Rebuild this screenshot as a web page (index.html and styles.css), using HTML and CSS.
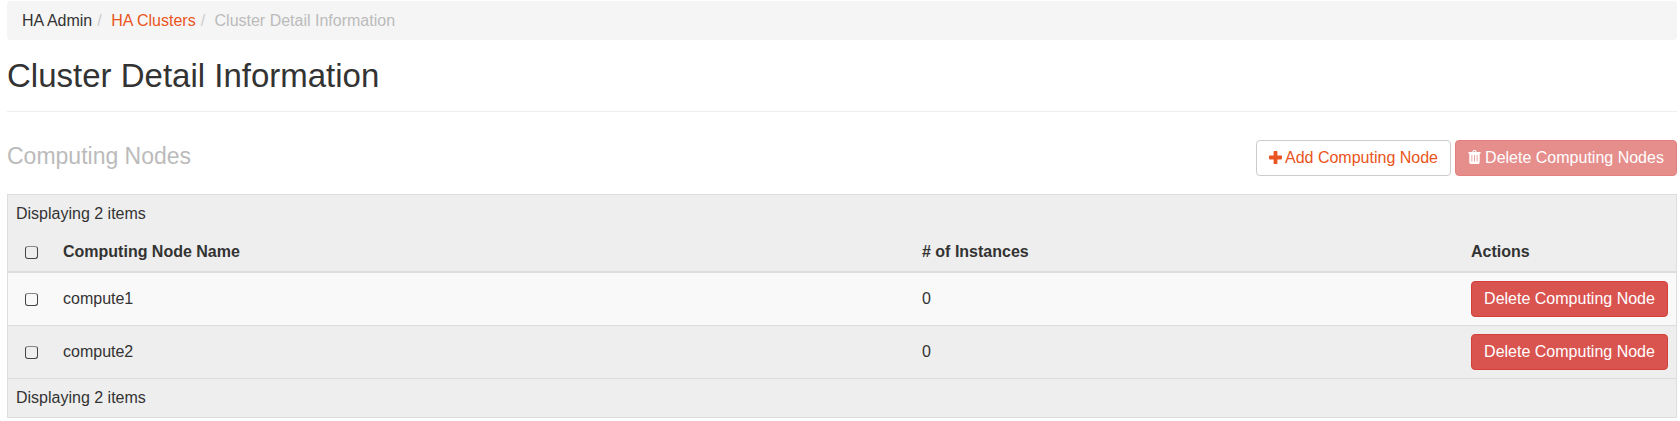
FILE: index.html
```html
<!DOCTYPE html>
<html lang="en">
<head>
<meta charset="utf-8">
<title>Cluster Detail Information</title>
<link rel="stylesheet" href="styles.css">
</head>
<body>
<ol class="breadcrumb">
  <li>HA Admin</li>
  <li><a href="#">HA Clusters</a></li>
  <li class="active">Cluster Detail Information</li>
</ol>
<header class="page-header"><h1>Cluster Detail Information</h1></header>
<div class="toolbar">
  <h3>Computing Nodes</h3>
  <div class="actions">
    <button class="btn btn-default"><svg class="icon plus" viewBox="0 0 13 13"><path d="M.8 4.600h3.800V.8q0-.8.800-.8h2.200q.8 0 .8.800v3.800h3.800q.8 0 .8.800v2.200q0 .8-.8.800H8.400v3.800q0 .8-.8.800H5.400q-.8 0-.8-.8V8.400H.8q-.8 0-.8-.8V5.400q0-.8.800-.8z"/></svg><span>Add Computing Node</span></button>
    <button class="btn btn-danger disabled"><svg class="icon trash" viewBox="0 0 13 14"><path fill-rule="evenodd" d="M4.200 2l.6-1.300Q5.100 0 5.800 0h1.400q.7 0 1 .7L8.800 2H12q.7 0 .7.600v1h-1v8.700q0 1.700-1.400 1.700H2.700q-1.400 0-1.400-1.700V3.600h-1v-1Q.3 2 1 2zM5.400 2h2.200l-.4-.9H5.800zM3.500 5v6.500h.8V5zM6.100 5v6.500h.8V5zM8.700 5v6.500h.8V5z"/></svg><span>Delete Computing Nodes</span></button>
  </div>
</div>
<table class="nodes">
  <colgroup><col class="col-check"><col class="col-name"><col class="col-count"><col class="col-actions"></colgroup>
  <thead>
    <tr class="summary"><td colspan="4">Displaying 2 items</td></tr>
    <tr class="labels"><th><span class="check"></span></th><th>Computing Node Name</th><th># of Instances</th><th>Actions</th></tr>
  </thead>
  <tbody>
    <tr class="odd"><td><span class="check"></span></td><td>compute1</td><td>0</td><td><button class="btn btn-danger">Delete Computing Node</button></td></tr>
    <tr><td><span class="check"></span></td><td>compute2</td><td>0</td><td><button class="btn btn-danger">Delete Computing Node</button></td></tr>
  </tbody>
  <tfoot><tr><td colspan="4">Displaying 2 items</td></tr></tfoot>
</table>
</body>
</html>
```
FILE: styles.css
```css
* { box-sizing: border-box; }
body {
  margin: 0;
  padding: 1px 3px 0 7px;
  background: #fff;
  color: #333;
  font: 16px/22px "Liberation Sans", Arial, sans-serif;
}
.breadcrumb {
  display: flex;
  height: 39px;
  margin: 0;
  padding: 9px 15px 8px;
  list-style: none;
  background: #f5f5f5;
  border-radius: 4px;
}
.breadcrumb li + li::before {
  content: "/\00a0";
  padding: 0 5px;
  color: #ccc;
}
.breadcrumb a { color: #e95420; text-decoration: none; }
.breadcrumb .active { color: #bbb; }
.page-header {
  height: 72px;
  padding-top: 17px;
  border-bottom: 1px solid #eee;
}
h1 { margin: 0; font-size: 33px; line-height: 37px; font-weight: 400; }
.toolbar {
  display: flex;
  justify-content: space-between;
  height: 36px;
  margin: 28px 0 18px;
}
h3 { margin: 0; font-size: 23px; line-height: 32px; font-weight: 400; color: #bbb; }
.actions { display: flex; gap: 4px; }
.btn {
  display: flex;
  align-items: center;
  justify-content: center;
  height: 36px;
  padding: 0 12px 1px;
  border: 1px solid #ccc;
  border-radius: 4px;
  background: #fff;
  font: inherit;
  white-space: nowrap;
}
.btn-default { width: 195px; color: #e95420; }
.btn-danger { width: 197px; background: #d9534f; border-color: #d43f3a; color: #fff; }
.btn-danger.disabled { width: 222px; opacity: .65; }
.icon { flex: none; fill: currentColor; }
.plus { width: 13px; height: 13px; margin: 0 3px 1px 0; }
.trash { width: 13px; height: 14px; margin: 0 4px 1px 0; }
.nodes {
  width: 100%;
  table-layout: fixed;
  border-collapse: separate;
  border-spacing: 0;
  border: 1px solid #ddd;
  background: #eee;
}
.col-check { width: 47px; }
.col-name { width: 859px; }
.col-count { width: 549px; }
.nodes td, .nodes th { padding: 0 8px; text-align: left; vertical-align: middle; }
.nodes .summary td { height: 38px; }
.nodes .labels th { height: 40px; border-bottom: 2px solid #ddd; }
.nodes tbody td { height: 53px; border-bottom: 1px solid #ddd; }
.nodes tfoot td { height: 38px; }
.odd { background: #f9f9f9; }
.check {
  display: block;
  width: 13px;
  height: 13px;
  margin: 1px 0 0 9px;
  border: 1px solid #444;
  border-top-color: #888;
  border-radius: 3px;
}
```
